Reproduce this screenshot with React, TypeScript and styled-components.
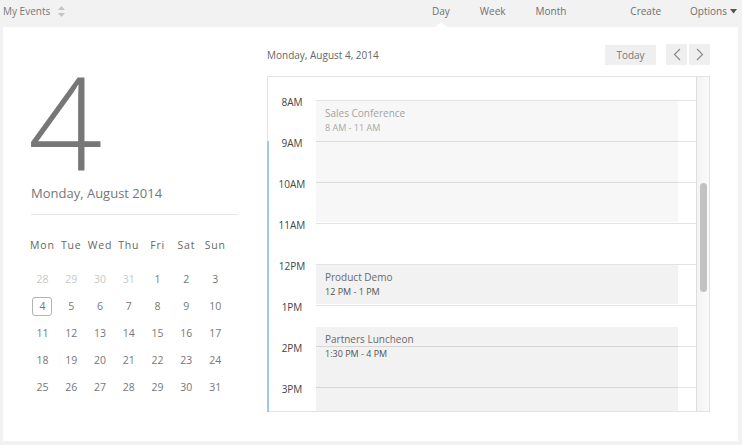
import styled, { createGlobalStyle } from "styled-components";

const GlobalStyle = createGlobalStyle`
  html, body {
    margin: 0;
    padding: 0;
    background: #f2f2f2;
    font-family: "Open Sans", "Liberation Sans", sans-serif;
  }
`;

const prevMonth = [28, 29, 30, 31];
const weekDays = ["Mon", "Tue", "Wed", "Thu", "Fri", "Sat", "Sun"];
const hours = ["8AM", "9AM", "10AM", "11AM", "12PM", "1PM", "2PM", "3PM"];

const HOUR = 41;

const events = [
  { title: "Sales Conference", time: "8 AM - 11 AM", start: 0, end: 3, past: true },
  { title: "Product Demo", time: "12 PM - 1 PM", start: 4, end: 5, past: false },
  { title: "Partners Luncheon", time: "1:30 PM - 4 PM", start: 5.5, end: 8, past: false },
];

export default function App() {
  const days: { n: number; muted: boolean }[] = [
    ...prevMonth.map((n) => ({ n, muted: true })),
    ...Array.from({ length: 31 }, (_, i) => ({ n: i + 1, muted: false })),
  ];

  return (
    <Page>
      <GlobalStyle />
      <TopBar>
        <Brand>
          My Events
          <svg width="7" height="11" viewBox="0 0 7 11">
            <path d="M3.5 0 L7 4 L0 4 Z" fill="#c4c4c4" />
            <path d="M3.5 11 L7 7 L0 7 Z" fill="#c4c4c4" />
          </svg>
        </Brand>
        <Tabs>
          <Tab $active>Day</Tab>
          <Tab>Week</Tab>
          <Tab>Month</Tab>
        </Tabs>
        <Action>Create</Action>
        <Action $last>
          Options
          <svg width="7" height="5" viewBox="0 0 7 5">
            <path d="M0 0 L7 0 L3.5 4.5 Z" fill="#555" />
          </svg>
        </Action>
      </TopBar>

      <Panel>
        <LeftColumn>
          <BigDay>4</BigDay>
          <MonthTitle>Monday, August 2014</MonthTitle>
          <Divider />
          <MonthGrid>
            {weekDays.map((d) => (
              <WeekDay key={d}>{d}</WeekDay>
            ))}
            {days.map((d, i) => (
              <DateCell key={i}>
                <DateNum $muted={d.muted} $selected={!d.muted && d.n === 4}>
                  {d.n}
                </DateNum>
              </DateCell>
            ))}
          </MonthGrid>
        </LeftColumn>

        <RightColumn>
          <Toolbar>
            <DateHeading>Monday, August 4, 2014</DateHeading>
            <TodayButton>Today</TodayButton>
            <NavGroup>
              <NavButton aria-label="Previous">
                <svg width="8" height="13" viewBox="0 0 8 13">
                  <polyline points="7,1 1.5,6.5 7,12" fill="none" stroke="#8a8a8a" strokeWidth="1.2" />
                </svg>
              </NavButton>
              <NavButton aria-label="Next">
                <svg width="8" height="13" viewBox="0 0 8 13">
                  <polyline points="1,1 6.5,6.5 1,12" fill="none" stroke="#8a8a8a" strokeWidth="1.2" />
                </svg>
              </NavButton>
            </NavGroup>
          </Toolbar>

          <DayView>
            <NowLine />
            <DayBody>
              <HourRow $lead>
                <Gutter />
                <Slot $lead />
              </HourRow>
              {hours.map((h) => (
                <HourRow key={h}>
                  <Gutter>
                    <HourLabel>{h}</HourLabel>
                  </Gutter>
                  <Slot />
                </HourRow>
              ))}
              {events.map((e) => (
                <Event
                  key={e.title}
                  $past={e.past}
                  style={{
                    top: 24 + e.start * HOUR,
                    height: (e.end - e.start) * HOUR - 2,
                  }}
                >
                  <EventTitle $past={e.past}>{e.title}</EventTitle>
                  <EventTime $past={e.past}>{e.time}</EventTime>
                </Event>
              ))}
            </DayBody>
            <ScrollTrack>
              <ScrollThumb />
            </ScrollTrack>
          </DayView>
        </RightColumn>
      </Panel>
    </Page>
  );
}

const Page = styled.div`
  width: 742px;
  height: 445px;
  background: #f2f2f2;
  overflow: hidden;
`;

const TopBar = styled.div`
  display: flex;
  align-items: flex-start;
  height: 27px;
  padding: 4px 5px 0 3px;
  box-sizing: border-box;
  font-size: 10px;
  line-height: 14px;
  color: #6f6f6f;
`;

const Brand = styled.div`
  display: flex;
  align-items: center;
  gap: 8px;
  color: #777;
`;

const Tabs = styled.div`
  display: flex;
  margin-left: auto;
  margin-right: 49px;
`;

const Tab = styled.div<{ $active?: boolean }>`
  position: relative;
  padding: 0 15px;
  height: 23px;
  &::after {
    content: "";
    display: ${(p) => (p.$active ? "block" : "none")};
    position: absolute;
    left: 50%;
    bottom: 0;
    margin-left: -6px;
    border-left: 6px solid transparent;
    border-right: 6px solid transparent;
    border-bottom: 5px solid #fff;
  }
`;

const Action = styled.div<{ $last?: boolean }>`
  display: flex;
  align-items: center;
  gap: 3px;
  padding: ${(p) => (p.$last ? "0 0 0 29px" : "0")};
`;

const Panel = styled.div`
  display: flex;
  margin: 0 4px 0 3px;
  height: 414px;
  background: #fff;
`;

const LeftColumn = styled.div`
  width: 207px;
  padding: 0 29px 0 28px;
  flex-shrink: 0;
`;

const BigDay = styled.div`
  height: 110px;
  margin-top: 39px;
  margin-left: -3px;
  font-size: 130px;
  line-height: 110px;
  font-weight: 300;
  color: #777;
`;

const MonthTitle = styled.div`
  margin-top: 8px;
  font-size: 13px;
  line-height: 18px;
  color: #777;
`;

const Divider = styled.div`
  margin-top: 12px;
  border-top: 1px solid #e6e6e6;
`;

const MonthGrid = styled.div`
  display: grid;
  grid-template-columns: repeat(7, 28.8px);
  grid-template-rows: 31px;
  grid-auto-rows: 27px;
  margin-top: 20px;
  margin-left: -3px;
`;

const WeekDay = styled.div`
  height: 20px;
  font-size: 10.5px;
  line-height: 20px;
  letter-spacing: 0.8px;
  text-align: center;
  color: #666;
`;

const DateCell = styled.div`
  display: flex;
  align-items: center;
  justify-content: center;
`;

const DateNum = styled.span<{ $muted: boolean; $selected: boolean }>`
  width: 20px;
  height: 19px;
  box-sizing: border-box;
  border: 1px solid ${(p) => (p.$selected ? "#b3b3b3" : "transparent")};
  border-radius: 3px;
  font-size: 10.5px;
  line-height: 17px;
  text-align: center;
  color: ${(p) => (p.$muted ? "#c8c8c8" : "#777")};
`;

const RightColumn = styled.div`
  width: 443px;
  padding-top: 17px;
`;

const Toolbar = styled.div`
  display: flex;
  align-items: center;
  height: 21px;
`;

const DateHeading = styled.div`
  flex: 1;
  font-size: 10px;
  color: #666;
`;

const TodayButton = styled.div`
  width: 51px;
  height: 20px;
  background: #efefef;
  font-size: 10px;
  line-height: 20px;
  text-align: center;
  color: #777;
`;

const NavGroup = styled.div`
  display: flex;
  gap: 2px;
  margin-left: 10px;
`;

const NavButton = styled.div`
  display: flex;
  align-items: center;
  justify-content: center;
  width: 21px;
  height: 21px;
  background: #efefef;
`;

const DayView = styled.div`
  position: relative;
  display: flex;
  height: 336px;
  margin-top: 11px;
  border: 1px solid #e2e2e2;
  box-sizing: border-box;
`;

const NowLine = styled.div`
  position: absolute;
  left: -1px;
  top: 64px;
  bottom: -1px;
  width: 2px;
  background: #a3c7ea;
`;

const DayBody = styled.div`
  position: relative;
  flex: 1;
  overflow: hidden;
`;

const HourRow = styled.div<{ $lead?: boolean }>`
  display: flex;
  height: ${(p) => (p.$lead ? 23 : HOUR)}px;
`;

const Gutter = styled.div`
  width: 48px;
  flex-shrink: 0;
  text-align: center;
`;

const HourLabel = styled.div`
  margin-top: -5px;
  font-size: 10px;
  line-height: 14px;
  color: #444;
`;

const Slot = styled.div<{ $lead?: boolean }>`
  flex: 1;
  border-top: ${(p) => (p.$lead ? "none" : "1px solid #e3e3e3")};
`;

const Event = styled.div<{ $past: boolean }>`
  position: absolute;
  left: 48px;
  right: 18px;
  padding: 5px 9px 0;
  box-sizing: border-box;
  background: ${(p) => (p.$past ? "rgba(0, 0, 0, 0.03)" : "rgba(0, 0, 0, 0.05)")};
`;

const EventTitle = styled.div<{ $past: boolean }>`
  font-size: 10px;
  line-height: 14px;
  color: ${(p) => (p.$past ? "#a2a2a2" : "#6a6a6a")};
`;

const EventTime = styled.div<{ $past: boolean }>`
  font-size: 9px;
  line-height: 15px;
  color: ${(p) => (p.$past ? "#a8a8a8" : "#555")};
`;

const ScrollTrack = styled.div`
  width: 12px;
  flex-shrink: 0;
  border-left: 1px solid #dedede;
  background: linear-gradient(to right, #f3f3f3, #fbfbfb);
`;

const ScrollThumb = styled.div`
  width: 7px;
  height: 109px;
  margin: 106px 0 0 3px;
  border-radius: 4px;
  background: #c2c2c2;
`;
